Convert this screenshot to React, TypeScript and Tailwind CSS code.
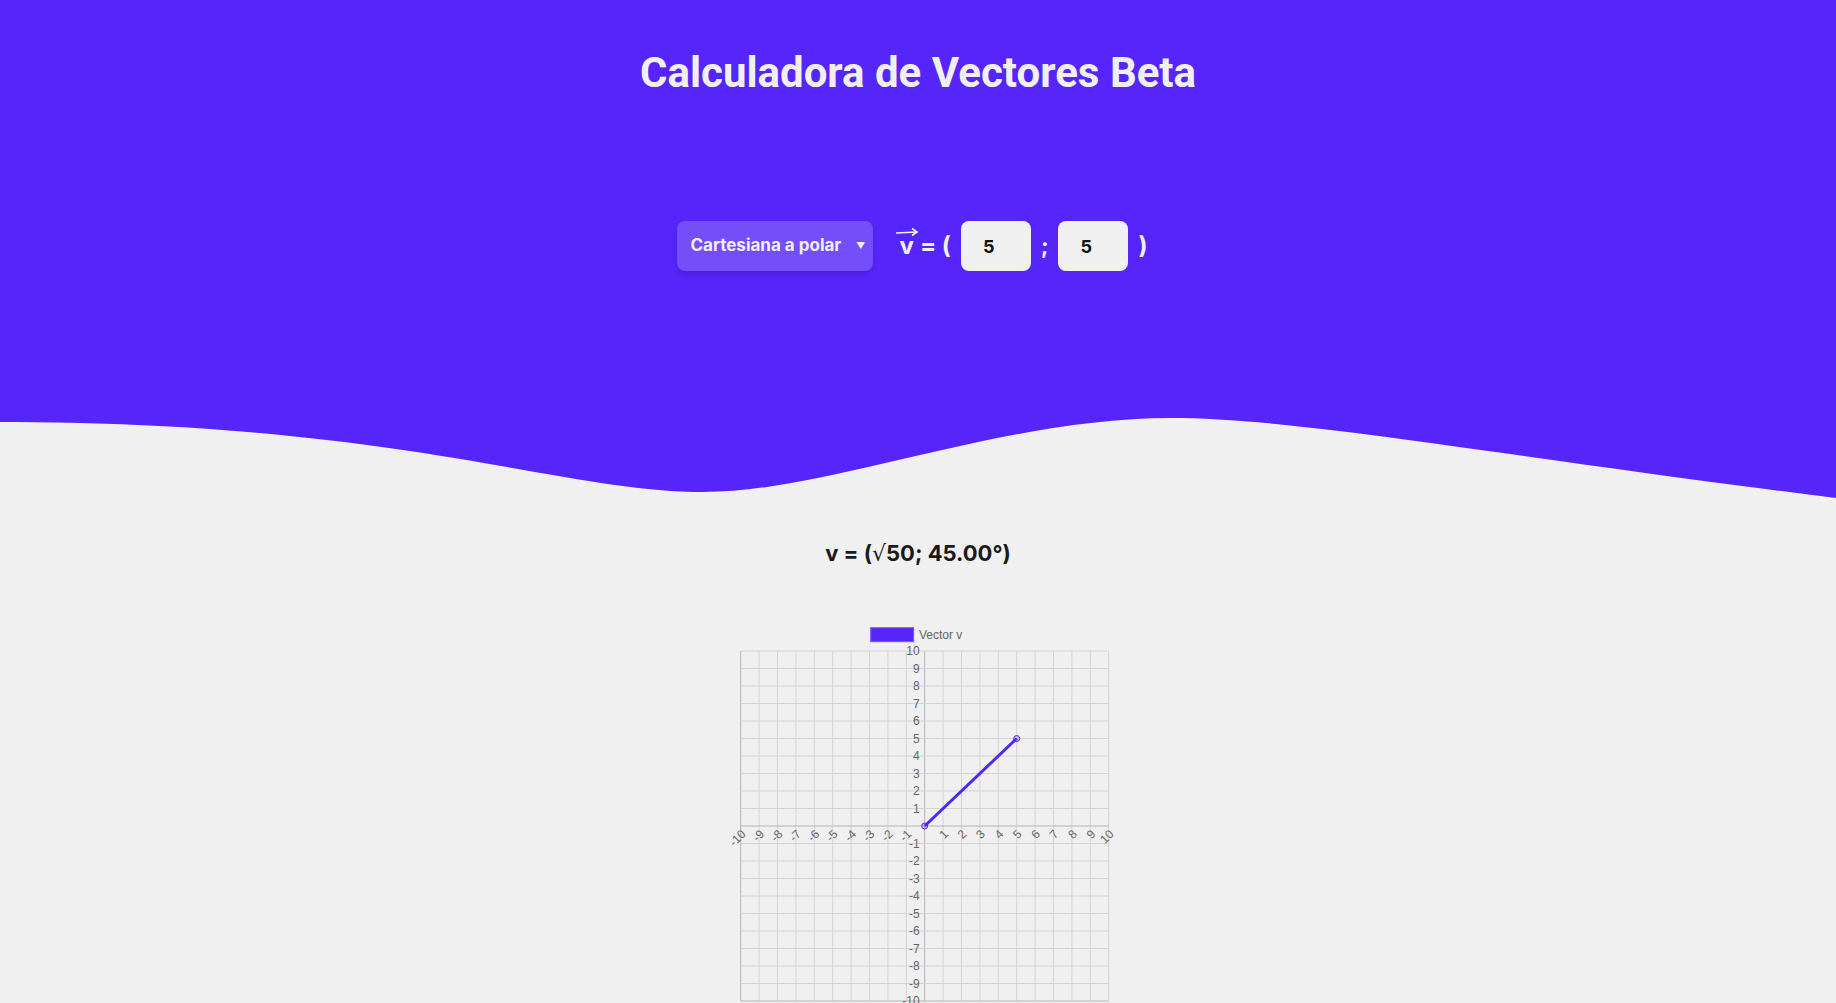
import React from 'react';

const PURPLE = '#5625f9';

const VectorChart: React.FC = () => {
  const left = 22.7;
  const top = 35;
  const stepX = 18.4;
  const stepY = 17.5;
  const cx = left + 10 * stepX;
  const cy = top + 10 * stepY;
  const ticks = Array.from({ length: 21 }, (_, i) => i - 10);
  const px = (v: number) => cx + v * stepX;
  const py = (v: number) => cy - v * stepY;

  return (
    <svg width={400} height={390} viewBox="0 0 400 390" className="block overflow-visible">
      <rect x={152.7} y={11.7} width={43} height={14} fill={PURPLE} stroke="#7a57fa" strokeWidth={1} />
      <text x={201} y={23} fontSize={12} fill="#666" fontFamily="'Liberation Sans', Arial, sans-serif">
        Vector v
      </text>

      {ticks.map(t => (
        <line
          key={'v' + t}
          x1={px(t)}
          x2={px(t)}
          y1={top}
          y2={top + 20 * stepY}
          stroke={t === 0 || t === -10 ? '#b4b4b4' : '#d4d4d4'}
          strokeWidth={1}
        />
      ))}
      {ticks.map(t => (
        <line
          key={'h' + t}
          x1={left}
          x2={left + 20 * stepX}
          y1={py(t)}
          y2={py(t)}
          stroke={t === 0 || t === -10 ? '#b4b4b4' : '#d4d4d4'}
          strokeWidth={1}
        />
      ))}

      {ticks
        .filter(t => t !== 0)
        .map(t => (
          <text
            key={'yl' + t}
            x={cx - 5}
            y={py(t)}
            fontSize={12}
            fill="#666"
            textAnchor="end"
            dominantBaseline="central"
            fontFamily="'Liberation Sans', Arial, sans-serif"
          >
            {t}
          </text>
        ))}

      {ticks
        .filter(t => t !== 0)
        .map(t => (
          <text
            key={'xl' + t}
            transform={`translate(${px(t) + 3},${cy + 6}) rotate(-45)`}
            fontSize={12}
            fill="#666"
            textAnchor="end"
            dominantBaseline="central"
            fontFamily="'Liberation Sans', Arial, sans-serif"
          >
            {t}
          </text>
        ))}

      <line x1={px(0)} y1={py(0)} x2={px(5)} y2={py(5)} stroke={PURPLE} strokeWidth={3} />
      <circle cx={px(0)} cy={py(0)} r={3} fill="rgba(86,37,249,0.2)" stroke={PURPLE} strokeWidth={1} />
      <circle cx={px(5)} cy={py(5)} r={3} fill="rgba(86,37,249,0.2)" stroke={PURPLE} strokeWidth={1} />
    </svg>
  );
};

export default function App() {
  return (
    <div
      className="min-h-screen bg-[#f0f0f0] text-[#1a1a1a]"
      style={{ fontFamily: "'Inter', 'Noto Sans', sans-serif" }}
    >
      <header className="bg-[#5625f9] h-[416px] flex flex-col items-center">
        <h1
          className="mt-[47px] text-[42px] leading-[52px] font-bold text-[#f0f0f0]"
          style={{ fontFamily: "'Roboto', 'Inter', sans-serif" }}
        >
          Calculadora de Vectores Beta
        </h1>

        <div className="mt-[122px] pr-[11px] flex items-center">
          <div className="flex items-center h-[50px] w-[196px] rounded-lg bg-[#744ef9] shadow-md pl-[13px] pr-2 text-[#f0f0f0] text-[17px] font-bold">
            <span className="flex-1">Cartesiana a polar</span>
            <span className="text-[9px]">▼</span>
          </div>

          <div className="ml-[26px] flex items-center text-[#f0f0f0] text-[24px] font-bold">
            <span className="relative">
              v
              <svg
                width="24"
                height="10"
                viewBox="0 0 24 10"
                className="absolute left-[-4px] top-[-1px]"
              >
                <path d="M1,6 L22,5 M17,1.5 L22,5 L17,8.5" stroke="#f0f0f0" strokeWidth="1.6" fill="none" />
              </svg>
            </span>
            <span className="ml-[6px]">= (</span>
          </div>

          <input
            readOnly
            value="5"
            className="ml-[10px] h-[50px] w-[70px] rounded-lg bg-[#f0f0f0] pl-[22px] text-[18px] font-bold text-[#111] outline-none"
          />
          <span className="mx-[10px] text-[#f0f0f0] text-[22px] font-bold">;</span>
          <input
            readOnly
            value="5"
            className="h-[50px] w-[70px] rounded-lg bg-[#f0f0f0] pl-[22px] text-[18px] font-bold text-[#111] outline-none"
          />
          <span className="ml-[10px] text-[#f0f0f0] text-[24px] font-bold">)</span>
        </div>
      </header>

      <svg width="100%" height="84" viewBox="0 0 1836 84" preserveAspectRatio="none" className="block">
        <path
          d="M0,0 L0,6 C400,6 560,76 703,76 C830,76 1000,2 1171,2 C1300,2 1500,40 1836,82 L1836,0 Z"
          fill={PURPLE}
        />
      </svg>

      <div className="flex flex-col items-center">
        <p className="mt-[38px] text-[22px] font-bold leading-[30px]">
          v = (<span className="font-normal" style={{ fontFamily: "'DejaVu Sans', sans-serif" }}>√</span>50; 45.00°)
        </p>
        <div className="mt-[47px]">
          <VectorChart />
        </div>
      </div>
    </div>
  );
}
